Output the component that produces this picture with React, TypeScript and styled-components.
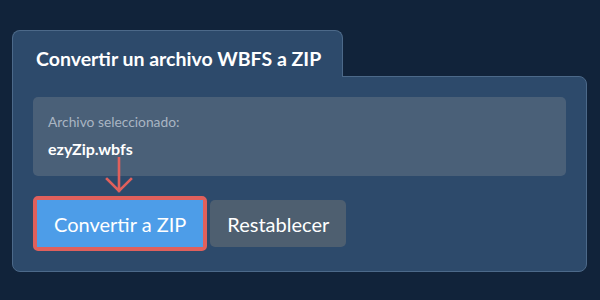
import React from 'react';
import styled, { createGlobalStyle } from 'styled-components';

const GlobalStyle = createGlobalStyle`
  html, body {
    margin: 0;
    padding: 0;
    background: #11233a;
  }
  body {
    font-family: Lato, "Noto Sans", sans-serif;
    width: 600px;
    height: 300px;
    overflow: hidden;
  }
`;

function ArrowDown() {
  return (
    <ArrowSvg width="30" height="38" viewBox="0 0 30 38">
      <path
        d="M15 1 V34 M3 22 L15 34 L27 22"
        fill="none"
        stroke="#e0605c"
        strokeWidth="2.6"
        strokeLinecap="square"
      />
    </ArrowSvg>
  );
}

function App() {
  return (
    <>
      <GlobalStyle />
      <Page>
        <Card>
          <Tab>Convertir un archivo WBFS a ZIP</Tab>
          <Panel>
            <FileBox>
              <FileLabel>Archivo seleccionado:</FileLabel>
              <FileName>ezyZip.wbfs</FileName>
            </FileBox>
            <ArrowDown />
            <ButtonRow>
              <Highlight>
                <Button variant="primary">Convertir a ZIP</Button>
              </Highlight>
              <Button variant="secondary">Restablecer</Button>
            </ButtonRow>
          </Panel>
        </Card>
      </Page>
    </>
  );
}

export default App;

const Page = styled.div`
  padding: 30px 0 0 12px;
`;

const Card = styled.div`
  width: 575px;
  display: flex;
  flex-direction: column;
  align-items: flex-start;
`;

const Tab = styled.div`
  position: relative;
  z-index: 1;
  box-sizing: border-box;
  width: 331px;
  height: 47px;
  margin-bottom: -1px;
  padding: 16px 23px 0;
  background: #2d4a6b;
  border: 1px solid #4c6989;
  border-bottom: none;
  border-radius: 8px 8px 0 0;
  color: #ffffff;
  font-size: 19.5px;
  font-weight: 700;
  line-height: 24px;
  white-space: nowrap;
`;

const Panel = styled.div`
  position: relative;
  box-sizing: border-box;
  width: 575px;
  height: 196px;
  padding: 20px 20px;
  background: #2d4a6b;
  border: 1px solid #4c6989;
  border-radius: 0 8px 8px 8px;
`;

const FileBox = styled.div`
  box-sizing: border-box;
  height: 79px;
  padding: 17px 15px 0;
  background: #4a6078;
  border-radius: 5px;
`;

const FileLabel = styled.div`
  color: #a9b5c3;
  font-size: 13.8px;
  line-height: 16px;
`;

const FileName = styled.div`
  margin-top: 9px;
  color: #ffffff;
  font-size: 16px;
  font-weight: 700;
  line-height: 20px;
`;

const ArrowSvg = styled.svg`
  position: absolute;
  left: 91px;
  top: 80px;
`;

const ButtonRow = styled.div`
  display: flex;
  align-items: center;
  gap: 3px;
  margin-top: 20px;
`;

const Highlight = styled.div`
  display: flex;
  border: 4.5px solid #e0605c;
  border-radius: 5px;
`;

const Button = styled.button<{ variant: 'primary' | 'secondary' }>`
  box-sizing: border-box;
  height: 47px;
  padding: 0 17px;
  border: none;
  border-radius: ${(p) => (p.variant === 'primary' ? '0' : '5px')};
  background: ${(p) => (p.variant === 'primary' ? '#4d9de8' : '#4e5f70')};
  color: #ffffff;
  font-family: Lato, "Noto Sans", sans-serif;
  font-size: 20px;
  font-weight: 400;
  cursor: pointer;
`;
